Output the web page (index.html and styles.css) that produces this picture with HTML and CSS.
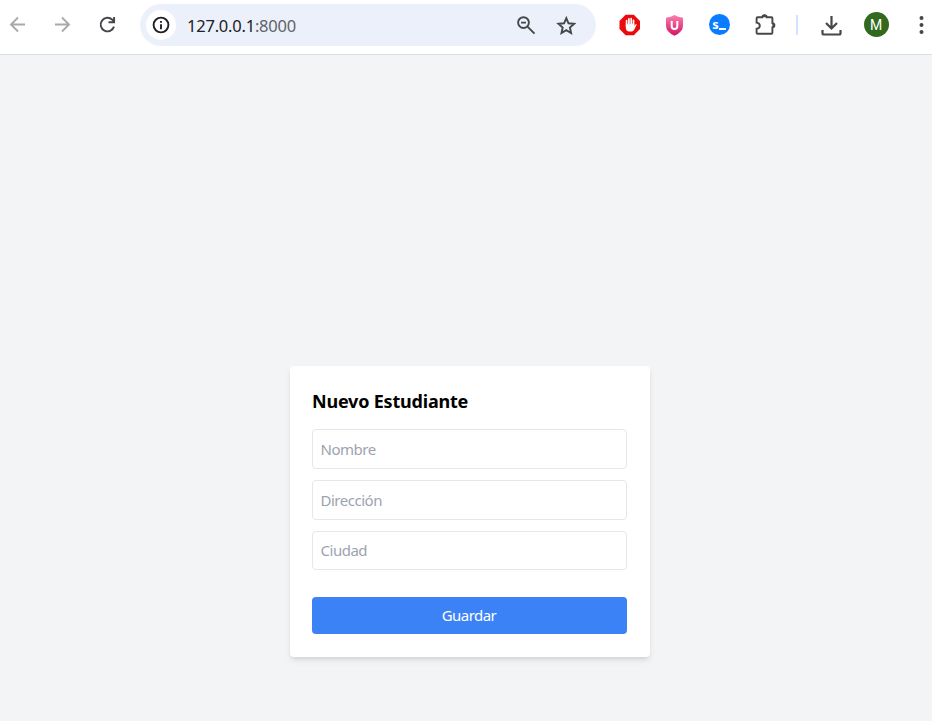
FILE: index.html
```html
<!DOCTYPE html>
<html lang="es">
<head>
<meta charset="utf-8">
<title>Nuevo Estudiante</title>
<link rel="stylesheet" href="styles.css">
</head>
<body>
<header class="toolbar">
  <nav class="nav">
    <span class="cell muted"><svg width="24" height="24" viewBox="0 0 24 24"><path d="M19 11.500H5M12 4.500l-7 7 7 7" class="line"/></svg></span>
    <span class="cell muted"><svg width="24" height="24" viewBox="0 0 24 24"><path d="M4 11.500H18M11 4.500l7 7-7 7" class="line"/></svg></span>
    <span class="cell"><svg width="24" height="24" viewBox="0 0 24 24"><path d="M18 13.600a6.800 6.800 0 1 1-1.700-6.900L18 8.500M18.100 4v5.300h-5.600" class="line"/></svg></span>
  </nav>
  <div class="omnibox">
    <span class="info"><svg width="18" height="18" viewBox="0 0 18 18"><circle cx="9" cy="9" r="7.400" class="line"/><path d="M9 8.200v5M9 4.900v1.900" class="line"/></svg></span>
    <span class="address">127.0.0.1<span class="port">:8000</span></span>
    <svg class="zoom" width="20" height="20" viewBox="0 0 20 20"><circle cx="7.500" cy="7.600" r="5.400" class="line"/><path d="M11.500 11.600l7 7M5 7.600h5" class="line"/></svg>
    <svg class="star" width="20" height="20" viewBox="0 0 20 20"><path d="M10.300 3.200l2.200 5.100 5.600.5-4.200 3.700 1.200 5.500-4.800-2.900-4.800 2.900 1.200-5.500-4.200-3.700 5.600-.5z" class="line"/></svg>
  </div>
  <div class="extensions">
    <span class="cell"><svg width="22" height="22" viewBox="0 0 22 22"><path d="M6.600.8h8.200L21 6.900v8.200L14.800 21.200H6.600L.5 15.100V6.900z" fill="#ea0a0a"/><path d="M7.600 12V6.700M9.900 10V4.800M12.200 10V4.700M14.500 12V6.300" fill="none" stroke="#fff" stroke-width="1.700" stroke-linecap="round"/><path d="M6.800 10.500l8.500-1v2.400l1.200-1.500q1-.7 1.200.2l-2.600 5.500q-.8 1.400-2.200 1.400h-2.600q-3.500 0-3.500-4z" fill="#fff"/></svg></span>
    <span class="cell"><svg width="20" height="22" viewBox="0 0 20 22"><defs><linearGradient id="shield" x1="0" y1="0" x2="0" y2="1"><stop offset="0" stop-color="#f982ae"/><stop offset="1" stop-color="#d51264"/></linearGradient></defs><path d="M9.500 1q3.500 2.300 8.500 2.800v7.700q0 6.600-8.500 10.200-8.500-3.600-8.500-10.200V3.800Q6 3.300 9.500 1z" fill="url(#shield)"/><path d="M6.700 7v5.200a2.800 2.800 0 0 0 5.600 0V7" fill="none" stroke="#fff" stroke-width="2"/></svg></span>
    <span class="cell"><span class="terminal">s<i></i></span></span>
    <span class="cell"><svg width="24" height="24" viewBox="0 0 24 24"><path d="M4.600 4.200h4.700q.2-2 2.200-2t2.200 2h4.700q1 0 1 1v5q2 .2 2 2.100t-2 2.100v5.300q0 1-1 1H4.600q-1 0-1-1v-3.900q3.200-.4 3.200-3.100t-3.200-3.100V5.200q0-1 1-1z" class="line"/><path d="M9 4.200q.2-2.400 2.500-2.400t2.500 2.400zM19.400 10q2.400.2 2.400 2.300t-2.400 2.300z" fill="#45474a"/></svg></span>
  </div>
  <span class="divider"></span>
  <div class="actions">
    <span class="cell"><svg width="24" height="24" viewBox="0 0 24 24"><path d="M12.500 3v12M7 10l5.500 5.500L18 10M3.500 17v3.400q0 1.100 1.100 1.100h15.800q1.100 0 1.100-1.100V17" class="line heavy"/></svg></span>
    <span class="cell"><span class="avatar">M</span></span>
    <span class="cell"><svg width="6" height="22" viewBox="0 0 6 22"><g fill="#45474a"><circle cx="3.500" cy="4" r="2"/><circle cx="3.500" cy="11" r="2"/><circle cx="3.500" cy="18" r="2"/></g></svg></span>
  </div>
</header>
<main class="page">
  <form class="card">
    <h1 class="title">Nuevo Estudiante</h1>
    <input class="field" type="text" placeholder="Nombre">
    <input class="field" type="text" placeholder="Dirección">
    <input class="field last" type="text" placeholder="Ciudad">
    <button class="save" type="button">Guardar</button>
  </form>
</main>
</body>
</html>
```
FILE: styles.css
```css
* { box-sizing: border-box; }
body {
  margin: 0;
  height: 721px;
  display: flex;
  flex-direction: column;
  overflow: hidden;
  background: #f3f4f6;
  font-family: "Noto Sans", "Open Sans", sans-serif;
}
svg { display: block; flex: none; }
.line { fill: none; stroke: currentColor; stroke-width: 1.9; }
.heavy { stroke-width: 2.2; }
.toolbar {
  display: flex;
  align-items: center;
  flex: none;
  height: 55px;
  padding-bottom: 5px;
  border-bottom: 1px solid #dce0dd;
  background: #fff;
  color: #45474a;
  overflow: hidden;
}
.nav, .extensions, .actions { display: flex; flex: none; }
.nav { margin-left: -5px; }
.cell {
  width: 45px;
  height: 42px;
  flex: none;
  display: flex;
  align-items: center;
  justify-content: center;
}
.muted { color: #aaa; }
.omnibox {
  display: flex;
  align-items: center;
  flex: none;
  width: 456px;
  height: 42px;
  margin: 0 11px 0 10px;
  padding: 0 20px 0 6px;
  border-radius: 21px;
  background: #ebf0fa;
}
.info {
  width: 30px;
  height: 30px;
  display: flex;
  align-items: center;
  justify-content: center;
  border-radius: 50%;
  background: #fff;
  color: #202124;
}
.address {
  margin-left: 11px;
  padding-top: 1px;
  font-size: 16.5px;
  letter-spacing: -0.22px;
  color: #202124;
}
.port { color: #5f6368; }
.zoom { margin-left: auto; }
.star { margin-left: 20px; }
.terminal {
  display: flex;
  align-items: center;
  justify-content: center;
  width: 21px;
  height: 21px;
  margin-right: 1px;
  border-radius: 50%;
  background: #0a7cff;
  color: #fff;
  font: bold 13px/1 "Noto Sans", sans-serif;
}
.terminal i {
  width: 7px;
  height: 2px;
  margin: 8px 0 0;
  background: #fff;
}
.divider {
  width: 2px;
  height: 20px;
  margin: 0 10px 0 9px;
  flex: none;
  background: #d3e3fd;
}
.avatar {
  display: flex;
  align-items: center;
  justify-content: center;
  width: 25px;
  height: 25px;
  margin-left: 1px;
  border-radius: 50%;
  background: #33691e;
  color: #fff;
  font: 14px/1 Roboto, sans-serif;
}
.page {
  flex: 1;
  display: flex;
  flex-direction: column;
  align-items: center;
  justify-content: flex-end;
  padding: 0 0 64px 8px;
}
.card {
  display: flex;
  flex-direction: column;
  width: 360px;
  height: 291px;
  padding: 22px 23px 23px 22px;
  border-radius: 4px;
  background: #fff;
  box-shadow: 0 4px 6px -1px rgb(0 0 0 / .1), 0 2px 4px -2px rgb(0 0 0 / .1);
}
.title {
  margin: 0 0 15px;
  font-size: 18px;
  line-height: 26px;
  letter-spacing: -0.2px;
  font-weight: 700;
  white-space: nowrap;
  color: #000;
}
.field {
  width: 100%;
  height: 40px;
  margin: 0 0 11px;
  padding: 0 7.5px;
  border: 1px solid #e5e7eb;
  border-radius: 4px;
  background: #fff;
  font: 15px/24px "Noto Sans", sans-serif;
  letter-spacing: -0.48px;
}
.field::placeholder { color: #9ca3af; opacity: 1; }
.last { height: 39px; margin-bottom: 27px; padding-bottom: 2px; }
.save {
  width: 100%;
  height: 37px;
  padding: 0 1px 2px 0;
  border: 0;
  border-radius: 4px;
  background: #3b82f6;
  color: #fff;
  font: 15px/24px "Noto Sans", sans-serif;
  letter-spacing: -0.55px;
}
```
